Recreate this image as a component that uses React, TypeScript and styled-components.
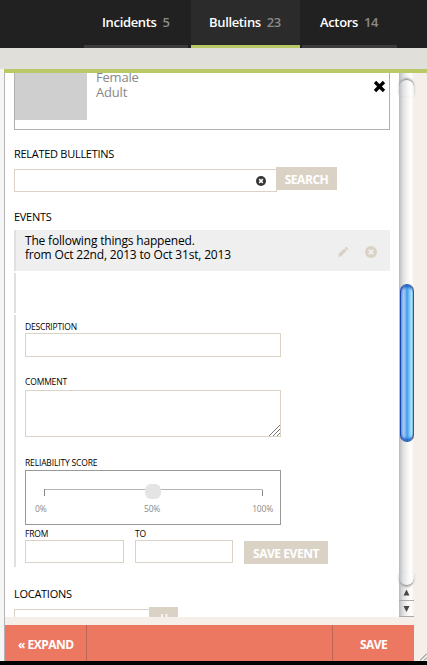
import React from 'react';
import styled, { createGlobalStyle } from 'styled-components';

const Global = createGlobalStyle`
  * { box-sizing: border-box; }
  body { margin: 0; overflow: hidden; background: #f6eee8; font-family: "Open Sans", sans-serif; color: #000; }
`;

const SAND = '#dbd2c6';

const Page = styled.div`
  width: 427px;
  height: 665px;
  display: flex;
  flex-direction: column;
  overflow: hidden;
`;

const TabBar = styled.nav`
  height: 48px;
  flex: none;
  display: flex;
  background: #212121;
  padding-left: 84px;
  white-space: nowrap;
`;

const Tab = styled.div<{ $width: number; $active?: boolean; $gap: number }>`
  width: ${(p) => p.$width}px;
  margin-right: ${(p) => p.$gap}px;
  padding-left: 18px;
  height: 48px;
  line-height: 45px;
  border-bottom: 3px solid ${(p) => (p.$active ? '#b9c966' : '#3c3c3c')};
  background: ${(p) => (p.$active ? '#2b2b2b' : 'transparent')};
  color: #fff;
  font-size: 13px;
  font-weight: 600;
  letter-spacing: -0.35px;
`;

const Count = styled.span`
  margin-left: 6px;
  color: #8a8a8a;
`;

const Band = styled.div`
  height: 21px;
  flex: none;
  background: #e0dfda;
`;

const Body = styled.div`
  display: flex;
  height: 592px;
  flex: none;
`;

const Gutter = styled.div`
  width: 5px;
  background: #f5f5f5;
  border-right: 1px solid #b4b4b4;
`;

const Main = styled.div`
  width: 423px;
  margin-left: -1px;
  padding-left: 1px;
  border-top: 4px solid #b9c966;
  display: flex;
  flex-direction: column;
`;

const Viewport = styled.div`
  display: flex;
  height: 544px;
  margin-bottom: 8px;
`;

const Content = styled.div`
  width: 394px;
  height: 544px;
  padding: 0 9px;
  overflow: hidden;
  background: #fff;
`;

const ActorCard = styled.div`
  height: 57px;
  display: flex;
  border: 1px solid #b0b0b0;
  border-top: 0;
  position: relative;
`;

const Portrait = styled.div`
  width: 72px;
  height: 47px;
  background: #cfcfcf;
`;

const ActorInfo = styled.div`
  margin: -3px 0 0 9px;
  font-size: 13px;
  line-height: 15px;
  letter-spacing: -0.2px;
  color: #888;
`;

const CardClose = styled.svg`
  position: absolute;
  right: 3px;
  top: 7px;
`;

const Heading = styled.h2<{ $top: number; $gap: number }>`
  margin: ${(p) => p.$top}px 0 ${(p) => p.$gap}px;
  height: 16px;
  line-height: 16px;
  font-size: 11px;
  font-weight: 400;
  letter-spacing: -0.28px;
  white-space: nowrap;
`;

const SearchRow = styled.div`
  display: flex;
  height: 25px;
`;

const Field = styled.div<{ $w: number; $h: number; $top?: number }>`
  width: ${(p) => p.$w}px;
  height: ${(p) => p.$h}px;
  flex: none;
  margin-top: ${(p) => p.$top ?? 0}px;
  border: 1px solid ${SAND};
  background: #fff;
  display: flex;
  align-items: center;
  justify-content: flex-end;
`;

const Button = styled.div<{ $w: number; $left?: number }>`
  width: ${(p) => p.$w}px;
  height: 23px;
  flex: none;
  margin-left: ${(p) => p.$left ?? 0}px;
  line-height: 25px;
  background: ${SAND};
  color: #fff;
  font-size: 12px;
  font-weight: 700;
  letter-spacing: -0.45px;
  text-align: center;
  z-index: 1;
  white-space: nowrap;
`;

const EventRow = styled.div`
  height: 41px;
  display: flex;
  background: #efefef;
  border-left: 2px solid #e0e0e0;
  padding: 4px 0 0 9px;
  font-size: 12px;
  line-height: 14px;
  letter-spacing: -0.18px;
`;

const EventText = styled.div`
  width: 312px;
  white-space: nowrap;
`;

const Actions = styled.div`
  display: flex;
  gap: 16px;
  margin-top: 12px;
`;

const EmptyRow = styled.div`
  height: 40px;
  margin: 2px 0;
  border-left: 2px solid #e0e0e0;
`;

const Form = styled.div`
  height: 252px;
  border-left: 2px solid #e0e0e0;
  padding: 6px 0 0 9px;
`;

const Label = styled.div<{ $top?: number; $h?: number }>`
  margin-top: ${(p) => p.$top ?? 0}px;
  height: ${(p) => p.$h ?? 12}px;
  line-height: 12px;
  font-size: 8.5px;
  letter-spacing: -0.16px;
  white-space: nowrap;
`;

const SliderBox = styled.div`
  width: 256px;
  height: 55px;
  border: 1px solid #999;
  padding: 13px 7px 0 9px;
`;

const Rail = styled.svg`
  display: block;
  margin-left: 9px;
`;

const Scale = styled.div`
  display: grid;
  grid-template-columns: 109px 1fr auto;
  margin-top: 3px;
  font-size: 8.5px;
  line-height: 12px;
  letter-spacing: -0.2px;
  color: #8a8a8a;
`;

const DateRow = styled.div`
  display: flex;
  gap: 11px;
  margin-top: 3px;
`;

const DateCol = styled.div<{ $w: number }>`
  width: ${(p) => p.$w}px;
`;

const SaveSlot = styled.div`
  padding-top: 13px;
`;

const ScrollTrack = styled.div`
  width: 15px;
  height: 544px;
  display: flex;
  flex-direction: column;
  background: linear-gradient(90deg, #b9b9b9, #dedede 25%, #f4f4f4 55%, #fff 80%, #f0f0f0);
`;

const TrackCap = styled.div<{ $bottom?: boolean }>`
  height: ${(p) => (p.$bottom ? 13 : 17)}px;
  margin-top: ${(p) => (p.$bottom ? 131 : 6)}px;
  border-radius: ${(p) => (p.$bottom ? '0 0 8px 8px' : '8px 8px 0 0')};
  border: 0 solid #999;
  border-${(p) => (p.$bottom ? 'bottom' : 'top')}-width: 1px;
  box-shadow: 0 ${(p) => (p.$bottom ? '1px' : '-1px')} 2px #aaa;
`;

const Thumb = styled.div`
  height: 158px;
  margin: 188px 0 0 1px;
  width: 14px;
  border-radius: 7px;
  border: 1px solid #3060a8;
  border-left-color: #1743ad;
  border-right-color: #455768;
  background: linear-gradient(90deg, #5d8fdc 0%, #a5c9f1 20%, #86baf0 35%, #429aec 50%, #7cc7fd 70%, #aeeaff 90%, #69a3ce 100%);
  box-shadow: inset 0 5px 3px -3px #1b59c5, inset 0 -5px 3px -3px #1b59c5;
`;

const Arrows = styled.svg`
  display: block;
  margin-top: auto;
`;

const Bottom = styled.div`
  display: flex;
  align-items: flex-end;
  justify-content: space-between;
`;

const Footer = styled.footer`
  width: 409px;
  height: 36px;
  display: flex;
  justify-content: space-between;
  background: #ec7862;
  color: #fff;
  font-size: 12px;
  font-weight: 700;
  line-height: 39px;
`;

const Expand = styled.div`
  width: 82px;
  padding-left: 13px;
  border-right: 1px solid #bd6554;
  letter-spacing: -0.5px;
  white-space: nowrap;
`;

const Save = styled.div`
  width: 82px;
  padding-left: 27px;
  border-left: 1px solid #bd6554;
  letter-spacing: -0.6px;
`;

const BlackStrip = styled.div`
  height: 4px;
  flex: none;
  background: #000;
`;

const Clear = styled.span`
  display: flex;
  margin-right: 10px;
`;

function RoundX({ size, fill, mark }: { size: number; fill: string; mark: string }) {
  return (
    <svg width={size} height={size} viewBox="0 0 12 12">
      <circle cx="6" cy="6" r="6" fill={fill} />
      <path d="M3.8 3.8l4.4 4.4M8.2 3.8l-4.4 4.4" stroke={mark} strokeWidth="1.9" />
    </svg>
  );
}

export default function App() {
  return (
    <Page>
      <Global />
      <TabBar>
        <Tab $width={104} $gap={3}>Incidents<Count>5</Count></Tab>
        <Tab $width={109} $gap={2} $active>Bulletins<Count>23</Count></Tab>
        <Tab $width={95} $gap={0}>Actors<Count>14</Count></Tab>
      </TabBar>
      <Band />
      <Body>
        <Gutter />
        <Main>
          <Viewport>
            <Content>
              <ActorCard>
                <Portrait />
                <ActorInfo>Female<br />Adult</ActorInfo>
                <CardClose width="13" height="13" viewBox="0 0 13 13">
                  <path d="M2 2l9 9M11 2l-9 9" stroke="#000" strokeWidth="3.2" />
                </CardClose>
              </ActorCard>
              <Heading $top={16} $gap={5}>RELATED BULLETINS</Heading>
              <SearchRow>
                <Field $w={263} $h={23} $top={2}>
                  <Clear><RoundX size={10} fill="#363636" mark="#fff" /></Clear>
                </Field>
                <Button $w={61} $left={-1}>SEARCH</Button>
              </SearchRow>
              <Heading $top={17} $gap={5}>EVENTS</Heading>
              <EventRow>
                <EventText>The following things happened.<br />from Oct 22nd, 2013 to Oct 31st, 2013</EventText>
                <Actions>
                  <svg width="12" height="12" viewBox="0 0 12 12">
                    <path d="M1 11l.7-3.2L7.2 2.4l2.4 2.4-5.4 5.5zM7.6 2L9 .9q.5-.3.9.1l1.2 1.2q.4.5 0 .9l-1.1 1.3z" fill={SAND} />
                  </svg>
                  <RoundX size={12} fill={SAND} mark="#efefef" />
                </Actions>
              </EventRow>
              <EmptyRow />
              <Form>
                <Label>DESCRIPTION</Label>
                <Field $w={256} $h={24} />
                <Label $top={19} $h={14}>COMMENT</Label>
                <Field $w={256} $h={47}>
                  <svg width="12" height="45" viewBox="0 0 12 45">
                    <path d="M1 45L12 34M5 45l7-7M9 45l3-3" stroke="#777" strokeWidth="1" />
                  </svg>
                </Field>
                <Label $top={20} $h={13}>RELIABILITY SCORE</Label>
                <SliderBox>
                  <Rail width="220" height="16" viewBox="0 0 220 16">
                    <path d="M0 5.5H218.5" stroke="#b4b4b4" />
                    <path d="M.5 5v7M218.5 6v6" stroke="#888" />
                    <rect x="101" y="0" width="16" height="15" rx="6" fill="#e4e4e4" />
                  </Rail>
                  <Scale><span>0%</span><span>50%</span><span>100%</span></Scale>
                </SliderBox>
                <DateRow>
                  <DateCol $w={99}><Label>FROM</Label><Field $w={99} $h={23} /></DateCol>
                  <DateCol $w={98}><Label>TO</Label><Field $w={98} $h={23} /></DateCol>
                  <SaveSlot><Button $w={84}>SAVE EVENT</Button></SaveSlot>
                </DateRow>
              </Form>
              <Heading $top={19} $gap={5}>LOCATIONS</Heading>
              <SearchRow>
                <Field $w={136} $h={23} $top={2} />
                <Button $w={29} $left={-1}>
                  <svg width="10" height="14" viewBox="0 0 10 14">
                    <path d="M3 4v8M7.500 4v8" stroke="#fff" strokeWidth="1.5" />
                  </svg>
                </Button>
              </SearchRow>
            </Content>
            <ScrollTrack>
              <TrackCap />
              <Thumb />
              <TrackCap $bottom />
              <Arrows width="15" height="31" viewBox="0 0 15 31">
                <path d="M0 14.5H15M0 30.5H15" stroke="#aaa" />
                <path d="M4.5 9.500L7.5 3.500 10.500 9.500zM4.500 20H10.500L7.500 26z" fill="#484848" />
              </Arrows>
            </ScrollTrack>
          </Viewport>
          <Bottom>
            <Footer>
              <Expand>« EXPAND</Expand>
              <Save>SAVE</Save>
            </Footer>
            <svg width="7" height="8" viewBox="0 0 7 8">
              <path d="M0 7.500L7 .5M4 7.500L7 4.500" stroke="#777" />
            </svg>
          </Bottom>
        </Main>
      </Body>
      <BlackStrip />
    </Page>
  );
}
